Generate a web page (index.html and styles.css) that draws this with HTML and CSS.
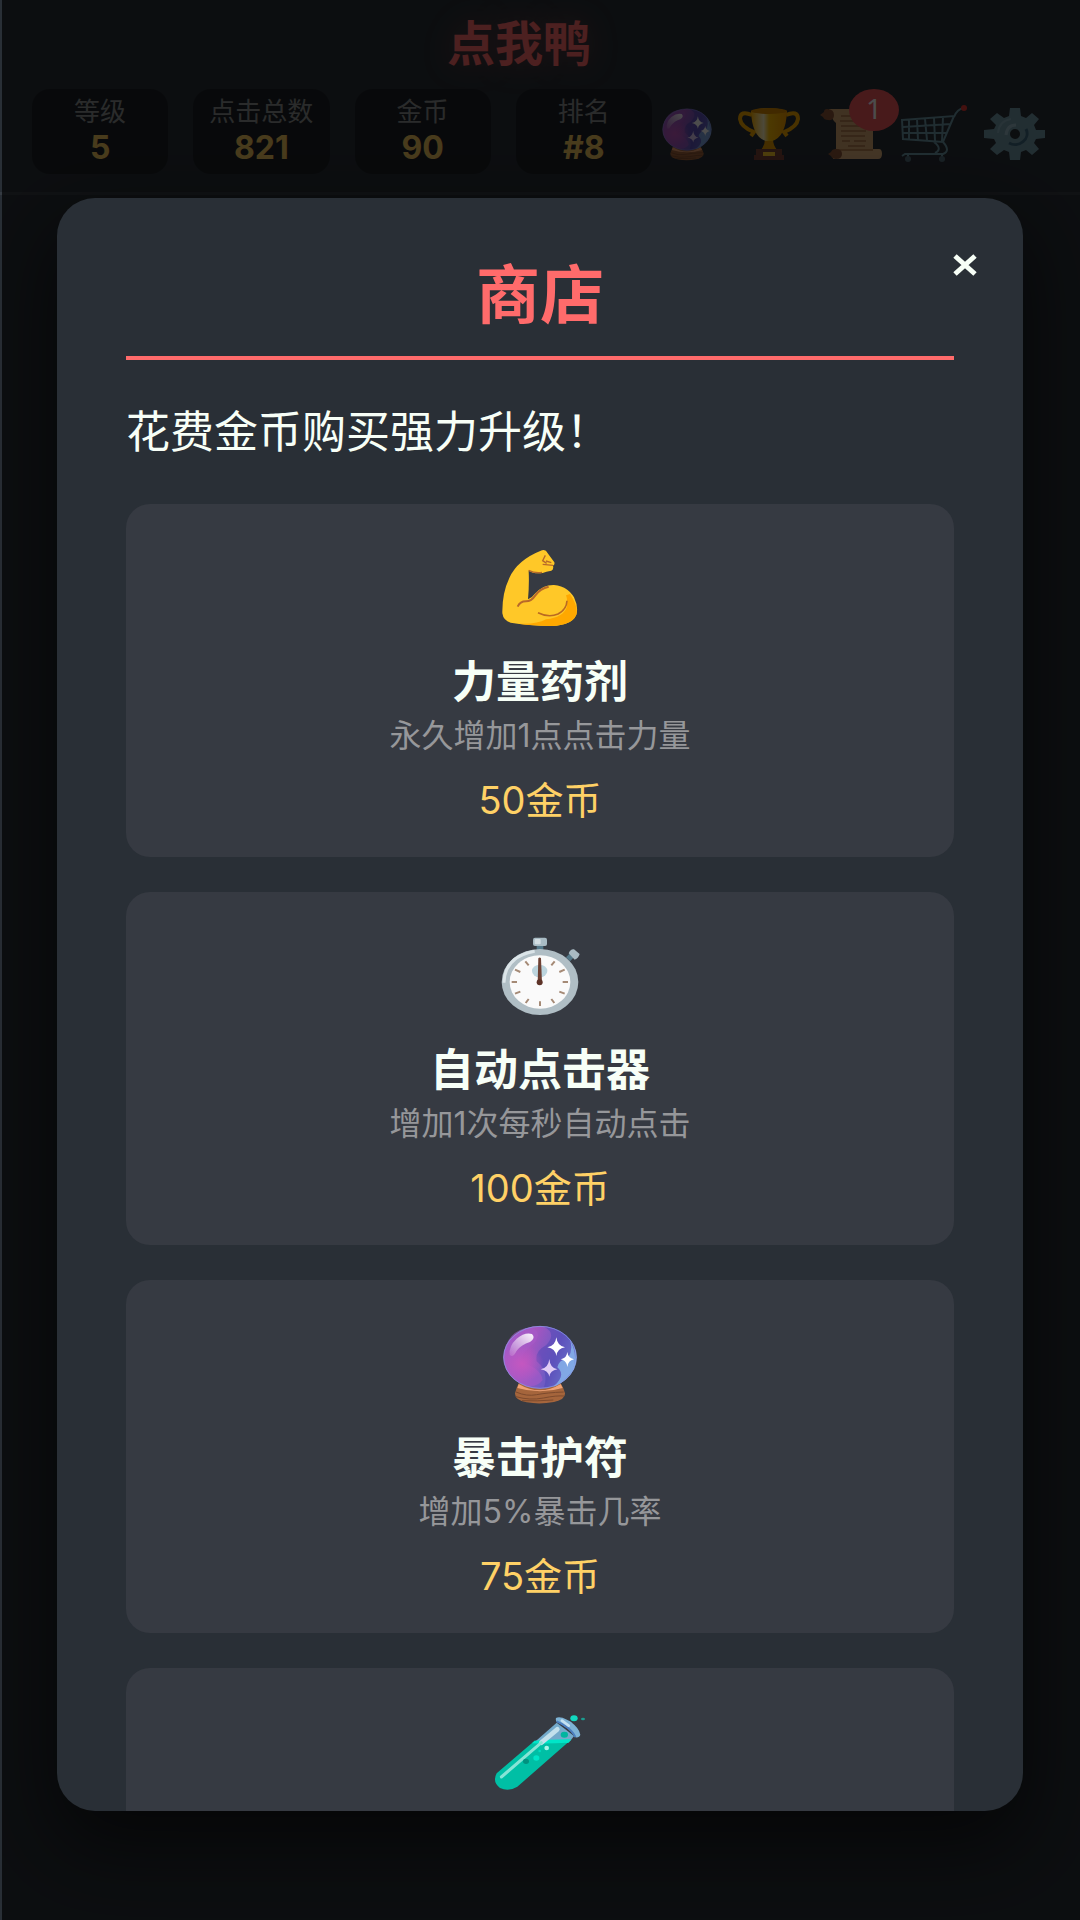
FILE: index.html
```html
<!DOCTYPE html>
<html lang="zh-CN">
<head>
    <meta charset="utf-8">
    <title>点我鸭</title>
    <meta name="viewport" content="width=device-width, initial-scale=1.0">
    <link rel="stylesheet" href="styles.css">
</head>
<body>
<svg class="defs" width="0" height="0" aria-hidden="true">
    <defs>
        <linearGradient id="ballFill" x1="0" y1="0.3" x2="1" y2="0.6">
            <stop offset="0" stop-color="#a05cc8"/>
            <stop offset="0.35" stop-color="#a455c0"/>
            <stop offset="0.7" stop-color="#6a5cc4"/>
            <stop offset="1" stop-color="#86b4ea"/>
        </linearGradient>
        <radialGradient id="ballPink" cx="0.25" cy="0.6" r="0.3">
            <stop offset="0" stop-color="#c457c0"/>
            <stop offset="1" stop-color="#c457c0" stop-opacity="0"/>
        </radialGradient>
        <linearGradient id="shine" x1="1" y1="0" x2="0" y2="1">
            <stop offset="0" stop-color="#fff" stop-opacity="0.95"/>
            <stop offset="1" stop-color="#fff" stop-opacity="0.1"/>
        </linearGradient>
        <linearGradient id="cup" x1="0" x2="1">
            <stop offset="0" stop-color="#ffb300"/>
            <stop offset="0.35" stop-color="#fff3c0"/>
            <stop offset="0.5" stop-color="#ffc107"/>
            <stop offset="1" stop-color="#f29a00"/>
        </linearGradient>
    </defs>
    <symbol id="ball" viewBox="156 72 288 240">
        <path d="M236 250Q230 262 225 280Q224 300 260 307Q300 314 342 306Q376 298 375 280Q370 262 362 250Z" fill="#a5653c"/>
        <path d="M236 252Q300 290 362 252L368 264Q300 284 232 264Z" fill="#efa274"/>
        <path d="M228 276Q260 290 290 284T371 276M228 290Q270 302 310 294T372 288M246 302Q290 304 340 300" fill="none" stroke="#7d4a2d" stroke-width="3"/>
        <ellipse cx="300" cy="172" rx="110" ry="94" fill="url(#ballFill)"/>
        <path d="M312 80Q352 100 318 136Q284 154 290 184Q328 214 312 262Q360 262 390 222Q420 170 394 124Q366 82 312 80Z" fill="#5549b6" opacity="0.6"/>
        <path d="M390 120Q418 170 394 216Q366 254 340 260Q380 226 352 202Q356 180 384 174Q400 150 390 120Z" fill="#88b8ec" opacity="0.8"/>
        <path d="M272 82Q310 96 282 130Q240 160 248 188Q304 206 308 240Q290 264 254 256Q192 226 191 168Q200 90 272 82Z" fill="#a75ac8" opacity="0.6"/>
        <ellipse cx="300" cy="172" rx="110" ry="94" fill="url(#ballPink)"/>
        <ellipse cx="300" cy="172" rx="109" ry="93" fill="none" stroke="#8a9bea" stroke-width="3" opacity="0.7"/>
        <path d="M276 102Q288 114 270 126Q244 134 230 152Q218 176 209 164Q206 138 230 116Q254 96 276 102Z" fill="url(#shine)"/>
        <path d="M349 112Q352 138 375 142Q352 146 349 168Q346 146 322 142Q346 138 349 112Z" fill="#fff"/>
        <path d="M382 156Q384 174 402 178Q384 182 382 201Q380 182 362 178Q380 174 382 156Z" fill="#fff"/>
        <path d="M328 177Q330 204 352 208Q330 212 328 230Q325 212 302 208Q325 204 328 177Z" fill="#e2cdf5"/>
    </symbol>
</svg>

<header class="header">
    <h1 class="logo">点我鸭</h1>
    <div class="bar">
        <dl class="stats">
            <div class="stat"><dt>等级</dt><dd>5</dd></div>
            <div class="stat"><dt>点击总数</dt><dd>821</dd></div>
            <div class="stat"><dt>金币</dt><dd>90</dd></div>
            <div class="stat"><dt>排名</dt><dd>#8</dd></div>
        </dl>
        <nav class="menu">
            <button type="button" aria-label="占卜"><svg><use href="#ball"/></svg></button>
            <button type="button" aria-label="成就">
                <svg viewBox="0 0 64 54">
                    <path d="M15 8Q3 3 3 12Q4 20 17 25L14 29M49 8Q61 3 61 12Q60 20 47 25L50 29" fill="none" stroke="#f5a800" stroke-width="4"/>
                    <path d="M28 32H36Q36 38 40 43H24Q28 38 28 32Z" fill="#e89b00"/>
                    <path d="M14 4Q15 30 29 34H35Q49 30 50 4Q32 -2 14 4Z" fill="url(#cup)"/>
                    <ellipse cx="32" cy="4" rx="18" ry="3" fill="#d98a00"/>
                    <path d="M19 42H45V48H47V53H17V48H19Z" fill="#7a4336"/>
                    <rect x="26" y="45" width="12" height="4" fill="#ffca28"/>
                </svg>
            </button>
            <button type="button" aria-label="任务">
                <svg viewBox="0 0 64 54">
                    <path d="M10 2H54V44H17V16Q12 12 10 2Z" fill="#d6a772"/>
                    <path d="M16 42H60Q63 42 63 47T59 52H14Z" fill="#e0b27e"/>
                    <path d="M17 42H54V44H17Z" fill="#b98450"/>
                    <path d="M8 2Q15 2 15 8T9 13Q5 13 4 10L1 8L5 5Q5 2 8 2ZM17 42Q23 42 23 47T17 52Q13 52 12 49L9 47L12 45Q13 42 17 42Z" fill="#8d5638"/>
                    <path d="M22 9H46M21 14H47M22 19H46M22 24H47M22 29H46M23 34H31M35 34H47M29 39H46" stroke="#a97446" stroke-width="1.5"/>
                </svg>
                <span class="badge">1</span>
            </button>
            <button type="button" aria-label="商店">
                <svg viewBox="0 0 64 54">
                    <path d="M1 13L53 9L42 35L2 32ZM8 13V32M16 12L17 33M24 12L26 33M33 11L34 34M42 10L41 34M2 20L50 17M2 26L46 26M53 10Q56 2 63 1M33 35Q42 42 34 46M42 35Q50 44 42 47H4L1 49M7 47V51M41 47V51" fill="none" stroke="#6b96a4" stroke-width="2"/>
                    <circle cx="63" cy="1" r="3" fill="#e53935"/>
                    <circle cx="7" cy="52" r="3" fill="#546e7a"/>
                    <circle cx="41" cy="52" r="3" fill="#546e7a"/>
                </svg>
            </button>
            <button type="button" aria-label="设置">
                <svg viewBox="0 0 64 54">
                    <path fill-rule="evenodd" d="M27 1H37L38 9L43 11L49 6L56 12L51 18L53 23L62 23V31L53 32L51 36L56 42L49 48L43 43L38 45L37 53H27L26 45L21 43L14 48L7 42L13 36L11 32L1 31V23L11 22L13 18L7 12L14 6L21 11L26 9ZM32 22A5 5 0 1 0 32 32A5 5 0 1 0 32 22Z" fill="#7399a8"/>
                    <path d="M43 22A12 11 0 0 1 26 36" fill="none" stroke="#3f6a80" stroke-width="3"/>
                    <path d="M23 28Q24 18 33 18" fill="none" stroke="#98b8c6" stroke-width="3"/>
                    <path d="M15 26Q16 14 28 12" fill="none" stroke="#86abba" stroke-width="2"/>
                </svg>
            </button>
        </nav>
    </div>
</header>

<div class="overlay">
    <section class="modal" role="dialog" aria-labelledby="shop-title">
        <button class="close" type="button" aria-label="关闭">
            <svg viewBox="0 0 24 22"><path d="M2 2L22 20M22 2L2 20" stroke="#f7fff7" stroke-width="5"/></svg>
        </button>
        <h2 id="shop-title">商店</h2>
        <p class="intro">花费金币购买强力升级！</p>
        <div class="items">
            <article class="item">
                <svg class="icon" viewBox="156 54 288 240">
                    <path d="M187 250Q186 190 208 144Q232 90 306 61Q318 58 322 68L343 97Q345 104 339 107Q342 118 334 122Q318 124 308 129Q280 132 266 122Q268 166 264 208Q276 204 286 190Q310 164 342 165Q382 168 402 202Q416 232 409 254Q396 286 336 288Q260 286 212 278Q190 272 187 250Z" fill="#ffc828"/>
                    <path d="M390 192Q416 232 409 254Q396 286 336 288Q280 287 236 281Q290 284 318 268Q370 262 380 232Q384 210 378 196Z" fill="#ffa800"/>
                    <path d="M233 230Q240 214 258 214Q274 214 286 196Q300 176 326 170" fill="none" stroke="#b8692a" stroke-width="6"/>
                    <path d="M294 248Q326 264 354 252Q380 238 381 212" fill="none" stroke="#ba6a22" stroke-width="5"/>
                    <path d="M316 76L308 92L320 100M308 103L339 106M318 93L334 98M266 121Q284 130 306 127" fill="none" stroke="#b8692a" stroke-width="4"/>
                </svg>
                <h3>力量药剂</h3>
                <p class="desc">永久增加1点点击力量</p>
                <p class="price">50金币</p>
            </article>
            <article class="item">
                <svg class="icon" viewBox="156 48 288 240">
                    <path d="M290 72H310V92H290ZM378 112L390 100L402 112L390 124Z" fill="#55798a"/>
                    <rect x="279" y="53" width="42" height="25" rx="6" fill="#a8bbc4"/>
                    <rect x="284" y="57" width="18" height="16" rx="3" fill="#d2dde2"/>
                    <path d="M386 100Q392 86 402 88L419 102Q416 114 404 119Z" fill="#a9bac3"/>
                    <ellipse cx="300" cy="186" rx="115" ry="99" fill="#b0bec5"/>
                    <path d="M192 188Q194 110 284 94" fill="none" stroke="#dbe4e8" stroke-width="9"/>
                    <ellipse cx="300" cy="186" rx="91" ry="80" fill="#fafafa"/>
                    <ellipse cx="299" cy="153" rx="23" ry="19" fill="#bcd5de"/>
                    <path d="M300 258V244M215 186H231M368 186H384M256 124L266 136M344 124L334 136M225 149L241 156M374 149L358 156M225 221L241 215M374 221L358 215M257 249L266 237M343 249L334 237" stroke="#a58a76" stroke-width="6"/>
                    <path d="M295 115Q299 110 303 115L306 188H293Z" fill="#6d4134"/>
                    <circle cx="299" cy="187" r="9" fill="#5d3328"/>
                </svg>
                <h3>自动点击器</h3>
                <p class="desc">增加1次每秒自动点击</p>
                <p class="price">100金币</p>
            </article>
            <article class="item">
                <svg class="icon"><use href="#ball"/></svg>
                <h3>暴击护符</h3>
                <p class="desc">增加5%暴击几率</p>
                <p class="price">75金币</p>
            </article>
            <article class="item">
                <svg class="icon" viewBox="156 66 288 240">
                    <path d="M350 98L402 138L390 154L280 160Z" fill="#74aacb"/>
                    <path d="M284 152Q336 160 392 150L232 290Q206 306 180 294Q156 276 170 250Z" fill="#00bfa5"/>
                    <path d="M284 152Q330 148 394 148L386 158Q330 162 276 160Z" fill="#00e5c8"/>
                    <path d="M348 84Q360 76 390 94Q418 114 421 134Q418 144 406 142Q396 118 350 96Q346 90 348 84Z" fill="#7db3d6"/>
                    <path d="M350 94Q392 112 406 141" fill="none" stroke="#4c7fc0" stroke-width="6"/>
                    <path d="M366 92L386 107" stroke="#c5e2f2" stroke-width="8" stroke-linecap="round"/>
                    <path d="M352 118L304 158" stroke="#c3e0ec" stroke-width="14" stroke-linecap="round"/>
                    <path d="M304 158L184 261" stroke="#86e4d6" stroke-width="9" stroke-linecap="round"/>
                    <ellipse cx="373" cy="134" rx="11" ry="9" fill="#00b59f"/>
                    <ellipse cx="258" cy="214" rx="9" ry="8" fill="#00917f"/>
                    <ellipse cx="289" cy="204" rx="9" ry="8" fill="#00e5c8"/>
                    <circle cx="320" cy="174" r="7" fill="#a7f5e9"/>
                    <circle cx="299" cy="183" r="4" fill="#00dcc0"/>
                    <ellipse cx="402" cy="85" rx="11" ry="9" fill="#12d8c0"/>
                    <ellipse cx="429" cy="87" rx="6" ry="4" fill="#1b9c90"/>
                </svg>
            </article>
        </div>
    </section>
</div>
</body>
</html>
```
FILE: styles.css
```css
* {
    padding: 0;
    margin: 0;
    box-sizing: border-box;
}
html, body {
    height: 100%;
    overflow: hidden;
}
body {
    background: #292f36;
    color: #f7fff7;
    font-family: Inter, "Noto Sans CJK SC", sans-serif;
}
button {
    border: none;
    background: none;
    cursor: pointer;
}
svg {
    display: block;
    overflow: visible;
}
.defs {
    position: absolute;
}

/* header */
.header {
    height: 195px;
    padding: 12px 30px 0 32px;
    border-bottom: 3px solid #363c43;
}
.logo {
    padding-right: 44px;
    font-size: 48px;
    line-height: 64px;
    text-align: center;
    color: #ff6b6b;
    text-shadow: 0 0 30px rgba(255, 107, 107, 0.3);
}
.bar {
    display: flex;
    align-items: center;
    margin-top: 13px;
}
.stats {
    display: flex;
    flex: 1;
    gap: 25px;
}
.stat {
    flex: 1;
    height: 85px;
    padding-top: 5px;
    border-radius: 18px;
    background: rgba(0, 0, 0, 0.3);
    text-align: center;
}
.stat dt {
    font-size: 26px;
    line-height: 36px;
    white-space: nowrap;
    color: #8d9090;
}
.stat dd {
    font-size: 32px;
    font-weight: bold;
    line-height: 36px;
    color: #f2c55f;
}
.menu {
    display: flex;
    gap: 12px;
    margin-top: 5px;
}
.menu button {
    position: relative;
    width: 70px;
    height: 54px;
}
.menu svg {
    width: 64px;
    height: 54px;
    margin: 0 auto;
}
.badge {
    position: absolute;
    top: -18px;
    right: -13px;
    width: 50px;
    height: 42px;
    border-radius: 50%;
    background: #f0575c;
    color: #fff;
    font-family: "Noto Sans", sans-serif;
    font-size: 28px;
    line-height: 38px;
}

/* shop */
.overlay {
    position: fixed;
    top: 0;
    right: 0;
    bottom: 0;
    left: 2px;
    padding: 198px 57px 109px 55px;
    background: rgba(0, 0, 0, 0.7);
}
.modal {
    position: relative;
    height: 100%;
    padding: 57px 69px;
    overflow-y: auto;
    scrollbar-width: none;
    border-radius: 38px;
    background: #292f36;
    box-shadow: 0 32px 80px rgba(0, 0, 0, 0.6);
}
.close {
    position: absolute;
    top: 44px;
    right: 34px;
    padding: 12px;
}
.close svg {
    width: 24px;
    height: 22px;
}
.modal h2 {
    padding-bottom: 21px;
    border-bottom: 4px solid #ff6b6b;
    font-size: 64px;
    line-height: 80px;
    text-align: center;
    color: #ff6b6b;
}
.intro {
    margin: 42px 0;
    font-size: 44px;
    line-height: 60px;
}
.items {
    display: grid;
    gap: 35px;
}
.item {
    display: flex;
    flex-direction: column;
    align-items: center;
    min-height: 353px;
    padding: 44px 24px 32px;
    border-radius: 24px;
    background: #363a42;
    text-align: center;
}
.icon {
    width: 96px;
    height: 80px;
}
.item h3 {
    margin-top: 28px;
    font-size: 44px;
    line-height: 52px;
}
.desc {
    margin-top: 8px;
    font-size: 32px;
    line-height: 40px;
    color: #96979a;
}
.price {
    margin-top: 20px;
    font-size: 38px;
    line-height: 48px;
    color: #ffd166;
}
```
